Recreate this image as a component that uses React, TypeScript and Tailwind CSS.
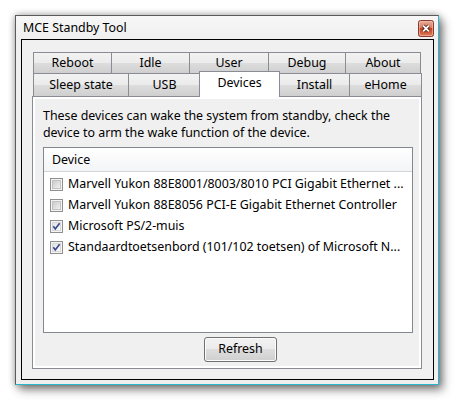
import React from "react";

function CheckBox({ checked }: { checked: boolean }) {
  return (
    <div className="relative w-[13px] h-[13px] shrink-0 border border-[#8f8f8f] bg-[#f4f4f4] p-[1px]">
      <div
        className={
          checked
            ? "w-full h-full border border-[#d8d8d8] bg-[linear-gradient(135deg,#e2e2e2,#fbfbfb)]"
            : "w-full h-full border border-[#c2c2c2] bg-[linear-gradient(135deg,#cbcbcb,#f1f1f1)]"
        }
      />
      {checked && (
        <svg className="absolute left-0 top-0" width="11" height="11" viewBox="0 0 11 11">
          <path d="M2.3 5.2 L4.3 8 L8.6 2.2" stroke="#34478a" strokeWidth="1.6" fill="none" />
        </svg>
      )}
    </div>
  );
}

function Tab({ label, w, first }: { label: string; w: string; first?: boolean }) {
  return (
    <div
      className={`${w} ${first ? "" : "-ml-px"} h-full flex items-center justify-center border border-b-0 border-[#898c95] bg-[linear-gradient(#f2f2f2_0%,#ebebeb_50%,#dddddd_50%,#cfcfcf_100%)]`}
    >
      {label}
    </div>
  );
}

const rows = [
  { c: false, t: "Marvell Yukon 88E8001/8003/8010 PCI Gigabit Ethernet ..." },
  { c: false, t: "Marvell Yukon 88E8056 PCI-E Gigabit Ethernet Controller" },
  { c: true, t: "Microsoft PS/2-muis" },
  { c: true, t: "Standaardtoetsenbord (101/102 toetsen) of Microsoft N..." },
];

export default function App() {
  return (
    <div className="w-[459px] h-[405px] bg-white pl-[15px] pt-[15px] font-['Noto_Sans',sans-serif] text-[12.4px] text-black">
      <div className="w-[424px] h-[370px] flex flex-col border border-[#5a5a5a] border-r-[#2ab5cf] border-b-[#2ab5cf] bg-[#efefef] shadow-[0_0_7px_rgba(0,0,0,0.35),4px_5px_9px_rgba(0,0,0,0.45)]">
        {/* Title bar */}
        <div className="h-[23px] shrink-0 flex items-start pl-[7px] pr-[4px] bg-[linear-gradient(#f7f7f7,#efefef)]">
          <div className="pt-[4px] leading-[16px]">MCE Standby Tool</div>
          <div className="ml-auto pt-[4px]">
            <svg width="16" height="17" viewBox="0 0 16 17">
              <defs>
                <linearGradient id="cg" x1="0" y1="0" x2="0" y2="1">
                  <stop offset="0" stopColor="#eab0a0" />
                  <stop offset="0.45" stopColor="#d77a62" />
                  <stop offset="0.5" stopColor="#c2431f" />
                  <stop offset="1" stopColor="#dc7e5f" />
                </linearGradient>
              </defs>
              <rect x="0.5" y="0.5" width="15" height="16" rx="2" fill="url(#cg)" stroke="#8a3b2a" />
              <rect x="1.5" y="1.5" width="13" height="14" rx="1.5" fill="none" stroke="#f3c3b4" strokeOpacity="0.6" />
              <path d="M5.2 5.7 L10.8 11.3 M10.8 5.7 L5.2 11.3" stroke="#4a2018" strokeWidth="3.4" />
              <path d="M5.2 5.7 L10.8 11.3 M10.8 5.7 L5.2 11.3" stroke="#ffffff" strokeWidth="1.8" />
            </svg>
          </div>
        </div>

        {/* Client area */}
        <div className="ml-[5px] mr-[4px] mb-[4px] flex-1 border border-black bg-[#f0f0f0] pl-[10px] pt-[12px]">
          {/* Tab row 1 */}
          <div className="h-[21px] flex ml-[1px]">
            <Tab first label="Reboot" w="w-[79px]" />
            <Tab label="Idle" w="w-[79px]" />
            <Tab label="User" w="w-[80px]" />
            <Tab label="Debug" w="w-[78px]" />
            <Tab label="About" w="w-[76px]" />
          </div>
          {/* Tab row 2 */}
          <div className="h-[23px] flex ml-[1px]">
            <Tab first label="Sleep state" w="w-[96px]" />
            <Tab label="USB" w="w-[73px]" />
            <div className="relative z-10 -ml-[2px] -mt-[2px] w-[81px] h-[26px] flex items-center justify-center pb-[3px] border border-b-0 border-[#898c95] bg-white">
              Devices
            </div>
            <div className="-ml-px w-[71px] h-full flex items-center justify-center border border-b-0 border-[#898c95] bg-[linear-gradient(#f2f2f2_0%,#ebebeb_50%,#dddddd_50%,#cfcfcf_100%)]">
              Install
            </div>
            <Tab label="eHome" w="w-[73px]" />
          </div>
          {/* Panel */}
          <div className="w-[390px] h-[273px] border border-[#898c95] bg-white p-[2px]">
            <div className="h-full bg-[#f0f0f0] pl-[8px] pt-[9px]">
              <div className="leading-[16.5px] whitespace-nowrap">
                These devices can wake the system from standby, check the
                <br />
                device to arm the wake function of the device.
              </div>
              <div className="mt-[6px] w-[370px] h-[186px] border border-[#828790] bg-white">
                <div className="h-[24px] flex items-center pl-[8px] pt-[2px] border-b border-[#d5d5d5] bg-[linear-gradient(#ffffff,#f3f4f6)]">
                  Device
                </div>
                <div className="mt-[2px]">
                  {rows.map((r, i) => (
                    <div key={i} className="h-[21px] flex items-center pl-[6px] gap-[5px] whitespace-nowrap">
                      <CheckBox checked={r.c} />
                      <span>{r.t}</span>
                    </div>
                  ))}
                </div>
              </div>
              <div className="mt-[4px] ml-[161px] w-[73px] h-[25px] flex items-center justify-center rounded-[3px] border border-[#707070] shadow-[inset_0_0_0_1px_#fcfcfc] bg-[linear-gradient(#f2f2f2_0%,#ebebeb_50%,#dddddd_50%,#cfcfcf_100%)]">
                Refresh
              </div>
            </div>
          </div>
        </div>
      </div>
    </div>
  );
}
